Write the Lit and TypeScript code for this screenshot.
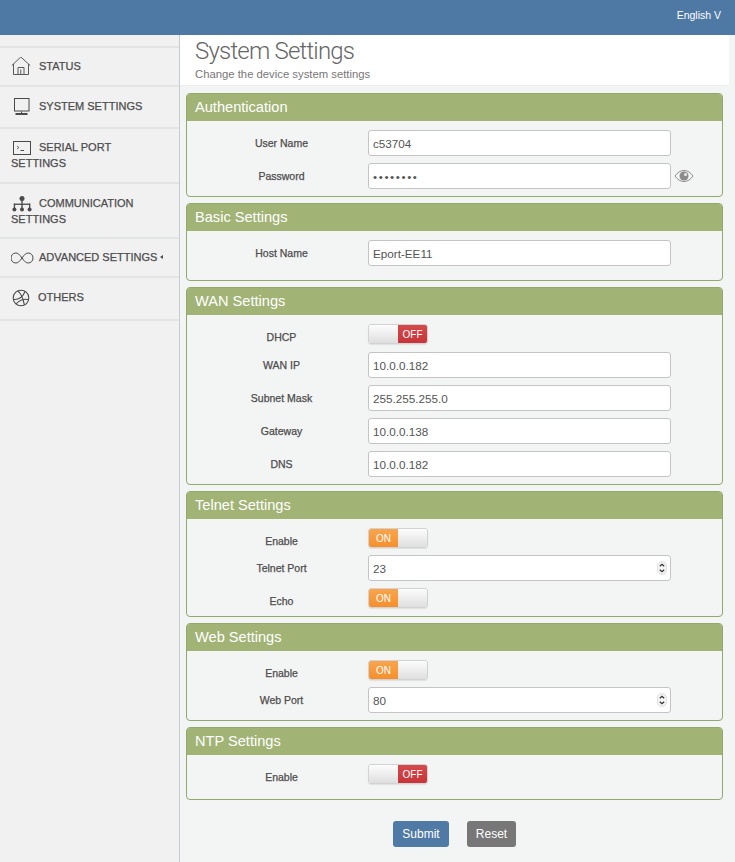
import { LitElement, html, css, svg } from "lit";
import { customElement } from "lit/decorators.js";

type Row =
  | { label: string; kind: "text" | "password" | "number"; value: string; eye?: boolean }
  | { label: string; kind: "toggle"; on: boolean; tall?: boolean };

interface Panel { title: string; bottom: number; rows: Row[] }

const panels: Panel[] = [
  { title: "Authentication", bottom: 7, rows: [
    { label: "User Name", kind: "text", value: "c53704" },
    { label: "Password", kind: "password", value: "12345678", eye: true },
  ]},
  { title: "Basic Settings", bottom: 14, rows: [
    { label: "Host Name", kind: "text", value: "Eport-EE11" },
  ]},
  { title: "WAN Settings", bottom: 7, rows: [
    { label: "DHCP", kind: "toggle", on: false, tall: true },
    { label: "WAN IP", kind: "text", value: "10.0.0.182" },
    { label: "Subnet Mask", kind: "text", value: "255.255.255.0" },
    { label: "Gateway", kind: "text", value: "10.0.0.138" },
    { label: "DNS", kind: "text", value: "10.0.0.182" },
  ]},
  { title: "Telnet Settings", bottom: 8, rows: [
    { label: "Enable", kind: "toggle", on: true },
    { label: "Telnet Port", kind: "number", value: "23" },
    { label: "Echo", kind: "toggle", on: true },
  ]},
  { title: "Web Settings", bottom: 7, rows: [
    { label: "Enable", kind: "toggle", on: true },
    { label: "Web Port", kind: "number", value: "80" },
  ]},
  { title: "NTP Settings", bottom: 15, rows: [
    { label: "Enable", kind: "toggle", on: false },
  ]},
];

const icons = {
  home: svg`<svg class="ic" width="20" height="20" viewBox="0 1 20 20" fill="none" stroke="#5a5a5a" stroke-width="1"><path d="M.8 9.500 9.800 1l9.400 8.500"/><path d="M2.500 8v10.500h15V8"/><path d="M7 18.500v-7h6v7"/><path d="M9.800 18.500v-5"/></svg>`,
  monitor: svg`<svg class="ic" width="20" height="18" viewBox="0 0 20 18" fill="none" stroke="#4a4a4a" stroke-width="1"><rect x="3.500" y=".5" width="14.500" height="12.500"/><path d="M10.500 13.500v1.500" /><path d="M4.500 16h12" stroke-width="2"/></svg>`,
  term: svg`<svg class="ic" width="20" height="16" viewBox="0 0 20 16" fill="none" stroke="#4a4a4a" stroke-width="1"><rect x="2.500" y="1.500" width="17" height="13"/><path d="m6 6 2 1.500L6 9" stroke-width=".8"/><path d="M9.500 10.500h3.500"/></svg>`,
  net: svg`<svg class="ic" width="22" height="16" viewBox="0 0 22 16" fill="#4a4a4a" stroke="none"><circle cx="11" cy="2.600" r="2.500"/><rect x="10.300" y="4" width="1.400" height="9"/><rect x="2.800" y="7.600" width="16.400" height="1.300"/><rect x="2.800" y="7.600" width="1.300" height="5"/><rect x="18" y="7.600" width="1.300" height="5"/><circle cx="3.400" cy="13.500" r="2"/><circle cx="11" cy="13.500" r="2"/><circle cx="18.600" cy="13.500" r="2"/></svg>`,
  inf: svg`<svg class="ic" width="24" height="12" viewBox="1 0 24 12" fill="none" stroke="#4a4a4a" stroke-width="1"><path d="M12 6C9.500 2.500 8 1 5.800 1 3 1 1 3.200 1 6s2 5 4.800 5C8 11 9.500 9.500 12 6c2.500-3.500 4-5 6.200-5C21 1 23 3.200 23 6s-2 5-4.800 5C16 11 14.500 9.500 12 6Z"/></svg>`,
  ball: svg`<svg class="ic" width="20" height="18" viewBox="0 0 20 18" fill="none" stroke="#4a4a4a" stroke-width="1.100"><circle cx="10" cy="9" r="7.800"/><path d="M6.800 1.900c3 2.600 5 5.300 6.500 13.800"/><path d="M2.400 10.500c4.800.3 9.300-1.800 11.600-8"/><path d="M5 15c2.800-3.500 8-5.800 12.800-4.200"/></svg>`,
};

const nav = [
  { lines: ["STATUS"], icon: icons.home, h: 39, mr: 8, lift: 1 },
  { lines: ["SYSTEM SETTINGS"], icon: icons.monitor, h: 42, mr: 8, lift: 2 },
  { lines: ["SERIAL PORT", "SETTINGS"], icon: icons.term, h: 55, mr: 8, lift: 1 },
  { lines: ["COMMUNICATION", "SETTINGS"], icon: icons.net, h: 55, mr: 6, lift: 0 },
  { lines: ["ADVANCED SETTINGS"], icon: icons.inf, h: 39, mr: 4, lift: 1, caret: true },
  { lines: ["OTHERS"], icon: icons.ball, h: 45, mr: 7, lift: 3 },
];

@customElement("app-root")
export class AppRoot extends LitElement {
  static styles = css`
    :host { display: block; width: 735px; height: 862px; overflow: hidden; background: #f3f4f4;
      font-family: "Liberation Sans", Arial, sans-serif; color: #555; }
    .top { height: 35px; background: #4f79a5; color: #fff; font-size: 10.5px; display: flex;
      justify-content: flex-end; align-items: center; padding: 0 14px 6px 0; box-sizing: border-box; }
    .layout { display: flex; height: 827px; }
    .side { width: 179px; flex: none; background: #f1f1f1; border-right: 1px solid #c9cccc; padding-top: 11px; }
    .item { display: flex; align-items: center; border-top: 2px solid #e3e4e4; box-sizing: border-box;
      padding-left: 11px; font-size: 11px; color: #4d4d4d; line-height: 16px;
      -webkit-text-stroke: .25px #4d4d4d; }
    .item:last-child { border-bottom: 2px solid #e3e4e4; }
    .item > div { width: 100%; }
    .ic { vertical-align: middle; margin: -4px 0; }
    .caret { display: inline-block; margin-left: 3px; vertical-align: 2px; border: 2.500px solid transparent; border-left: 0; border-right: 3px solid #4d4d4d; }
    .main { flex: 1; min-width: 0; padding-right: 6px; }
    .head { background: #fff; height: 51px; box-sizing: border-box; padding: 2px 0 0 15px; border-bottom: 1px solid #ecedec; }
    h1 { margin: 0; font: 300 24px/29px Roboto, "Liberation Sans", sans-serif; letter-spacing: -.8px; color: #666; }
    .sub { font-size: 11.300px; line-height: 14px; color: #777; margin-top: 1px; }
    .panels { display: flex; flex-direction: column; gap: 6px; padding: 7px 6px 0 6px; }
    .panel { border: 1px solid #93a86d; border-radius: 4px; overflow: hidden; background: #f3f4f4; }
    .ptitle { background: #a1b476; color: #fff; font-size: 14.600px; line-height: 26px; height: 27px; padding-left: 8px; }
    .pbody { display: flex; flex-direction: column; gap: 7px; padding-top: 9px; }
    .row { display: grid; grid-template-columns: 181px 303px auto; align-items: center; }
    .tall { margin-bottom: 1px; }
    .lab { text-align: center; font-size: 10.500px; color: #4d4d4d; padding: 0 0 1px 8px; -webkit-text-stroke: .25px #4d4d4d; }
    .lab.low { padding: 6px 0 0 8px; }
    .field { position: relative; display: block; }
    input { width: 100%; height: 26px; box-sizing: border-box; border: 1px solid #c4c4c4; border-radius: 3px; background: #fff;
      padding: 0 4px; font: 11.700px "Liberation Sans", Arial, sans-serif; color: #555; outline: none; display: block; }
    input[type="password"] { letter-spacing: 1.600px; }
    .spin { position: absolute; right: 4px; top: 6px; }
    .eye { margin-left: 3px; display: block; }
    .toggle { width: 60px; height: 20px; box-sizing: border-box; display: flex; border: 1px solid #d2d2d2; border-radius: 3px; overflow: hidden; font-size: 10px; color: #fff; box-shadow: 0 1px 1px rgba(0,0,0,.08); }
    .toggle span { width: 29px; display: flex; align-items: center; justify-content: center; }
    .knob { flex: 1; background: linear-gradient(#fdfdfd, #dedede); }
    .on { background: linear-gradient(#f9a54e, #f58f2c); }
    .off { background: linear-gradient(#d34a4c, #c7343a); }
    .btns { display: flex; justify-content: center; gap: 18px; padding-top: 21px; }
    .btn { height: 26px; border-radius: 3px; color: #fff; font-size: 12px; display: flex; align-items: center; justify-content: center; }
    .submit { width: 56px; background: #4f7aa6; }
    .reset { width: 49px; background: #777; }
  `;

  private control(r: Row) {
    if (r.kind === "toggle") {
      return html`<div class="toggle">${r.on
        ? html`<span class="on">ON</span><div class="knob"></div>`
        : html`<div class="knob"></div><span class="off">OFF</span>`}</div>`;
    }
    return html`<label class="field"><input type=${r.kind === "password" ? "password" : "text"} .value=${r.value} />${r.kind === "number"
      ? svg`<svg class="spin" width="10" height="14" viewBox="0 0 10 14"><rect x=".5" y=".5" width="9" height="13" rx="4.500" fill="#f4f4f4" stroke="#cfcfcf" stroke-width=".6"/><path d="m2.800 5.200 2.200-2 2.200 2M2.800 8.800l2.200 2 2.200-2" fill="none" stroke="#333" stroke-width="1.200"/></svg>`
      : ""}</label>`;
  }

  render() {
    return html`
      <div class="top">English V</div>
      <div class="layout">
        <nav class="side">
          ${nav.map((n) => html`<div class="item" style="height:${n.h}px"><div style="padding-bottom:${n.lift}px"><span style="margin-right:${n.mr}px">${n.icon}</span>${n.lines[0]}${n.caret ? html`<span class="caret"></span>` : ""}${n.lines[1] ? html`<br />${n.lines[1]}` : ""}</div></div>`)}
        </nav>
        <main class="main">
          <div class="head">
            <h1>System Settings</h1>
            <div class="sub">Change the device system settings</div>
          </div>
          <div class="panels">
            ${panels.map((p) => html`
              <section class="panel">
                <div class="ptitle">${p.title}</div>
                <div class="pbody" style="padding-bottom:${p.bottom}px">
                  ${p.rows.map((r) => html`
                    <div class="row ${r.kind === "toggle" && r.tall ? "tall" : ""}">
                      <div class="lab ${r.kind === "toggle" ? "low" : ""}">${r.label}</div>
                      ${this.control(r)}
                      ${"eye" in r && r.eye ? svg`<svg class="eye" width="20" height="14" viewBox="0 0 20 14"><path d="M1 7c2.500-3.700 5.500-5.500 9-5.500s6.500 1.800 9 5.500c-2.500 3.700-5.500 5.500-9 5.500S3.500 10.700 1 7Z" fill="#f3f4f4" stroke="#8c8c8c"/><circle cx="10" cy="7" r="4.500" fill="#8c8c8c"/><circle cx="11.500" cy="5.500" r="1.500" fill="#e8e8e8"/></svg>` : ""}
                    </div>`)}
                </div>
              </section>`)}
          </div>
          <div class="btns">
            <div class="btn submit">Submit</div>
            <div class="btn reset">Reset</div>
          </div>
        </main>
      </div>
    `;
  }
}
